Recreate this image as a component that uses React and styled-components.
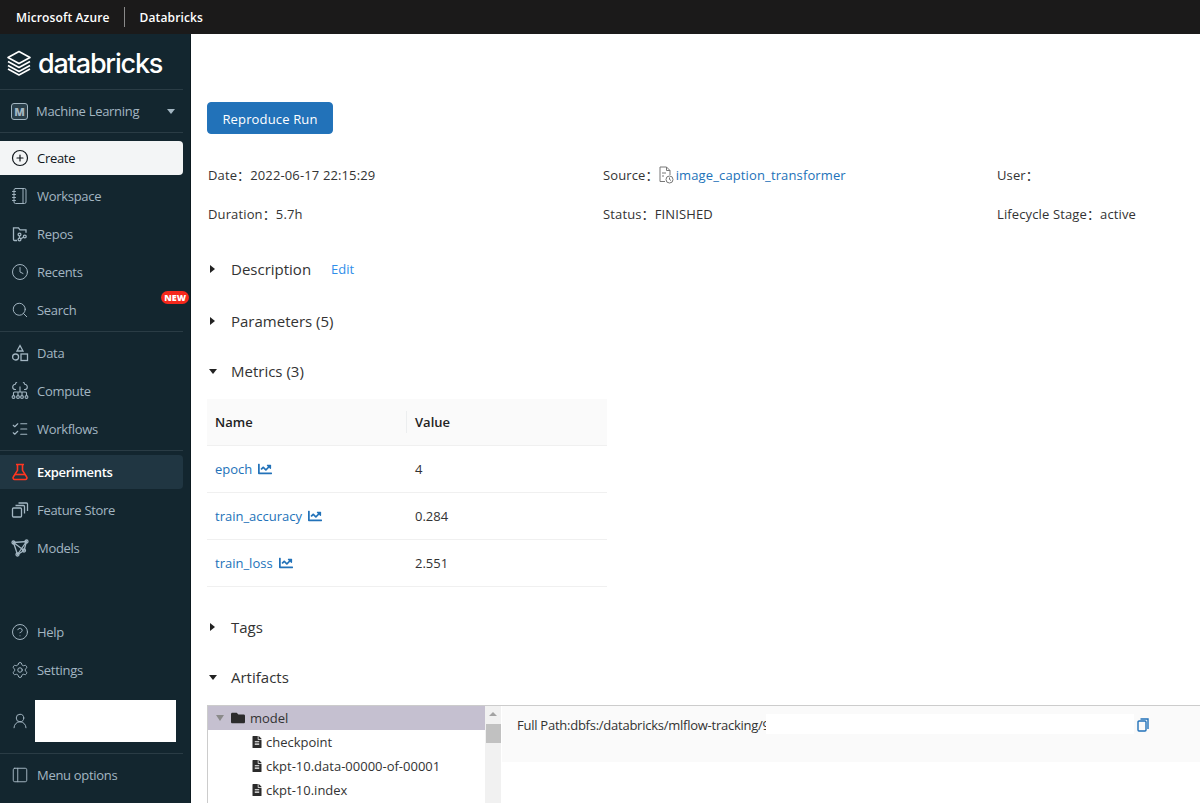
import React from "react";
import styled, { createGlobalStyle } from "styled-components";
import { FaChartLine, FaFileAlt, FaFolder } from "react-icons/fa";
import {
  CirclePlus,
  Clock,
  Search,
  ListChecks,
  CircleHelp,
  Settings,
  UserRound,
  PanelLeft,
  Notebook,
} from "lucide-react";

const GlobalStyle = createGlobalStyle`
  html, body {
    margin: 0;
    padding: 0;
    height: 100%;
    overflow: hidden;
    background: #fff;
    font-family: "Open Sans", "Noto Sans", "Noto Sans CJK SC", sans-serif;
    color: #333;
  }
`;

const Page = styled.div`
  width: 1200px;
  height: 803px;
  display: flex;
  flex-direction: column;
  overflow: hidden;
`;

const TopBar = styled.header`
  height: 34px;
  flex: none;
  background: #1b1a1a;
  display: flex;
  align-items: center;
  padding-left: 16px;
  color: #fff;
  font-size: 12px;
  font-weight: 600;
  letter-spacing: 0.13px;
`;

const TopDivider = styled.span`
  width: 1px;
  height: 20px;
  background: #8a8a8a;
  margin: 0 15px 0 14px;
`;

const Body = styled.div`
  flex: 1;
  display: flex;
  min-height: 0;
`;

const Sidebar = styled.nav`
  flex: none;
  background: #13262f;
  border-right: 1px solid #0d1a20;
  display: flex;
  flex-direction: column;
  padding: 0 7px 11px 0;
  box-sizing: border-box;
  width: 191px;
`;

const LogoRow = styled.div`
  height: 55px;
  box-sizing: border-box;
  padding: 3px 0 0 6px;
  display: flex;
  align-items: center;
  gap: 6px;
  color: #fff;
  font-family: "Inter", sans-serif;
  font-size: 27px;
  font-weight: 500;
  letter-spacing: -1.2px;
`;

const Rule = styled.div`
  height: 1px;
  background: #2a3c45;
  margin: ${(p) => p.$margin || "0"};
`;

const SpaceRow = styled.div`
  height: 42px;
  display: flex;
  align-items: center;
  padding: 0 8px 0 11px;
  color: #a3b6c2;
  font-size: 13px;
  font-weight: 500;
  letter-spacing: -0.3px;
  gap: 8px;
`;

const SpaceBadge = styled.span`
  width: 15px;
  height: 15px;
  border: 1.5px solid #a3b6c2;
  border-radius: 3px;
  display: flex;
  align-items: center;
  justify-content: center;
  font-size: 11px;
  font-weight: 800;
  background: #2a3f4a;
`;

const Caret = styled.span`
  margin-left: auto;
  width: 0;
  height: 0;
  border-left: 4px solid transparent;
  border-right: 4px solid transparent;
  border-top: 5px solid #a3b6c2;
`;

const NavList = styled.div`
  display: flex;
  flex-direction: column;
  gap: 4px;
  margin: ${(p) => p.$margin || "0"};
`;

const NavItem = styled.div`
  position: relative;
  height: 34px;
  display: flex;
  align-items: center;
  gap: 8px;
  padding-left: 11px;
  border-radius: 0 4px 4px 0;
  font-size: 13px;
  letter-spacing: -0.3px;
  font-weight: ${(p) => (p.$active ? 600 : 500)};
  color: ${(p) => (p.$create ? "#11171c" : p.$active ? "#fff" : "#a3b6c2")};
  background: ${(p) => (p.$create ? "#f3f5f6" : p.$active ? "#203642" : "transparent")};
  svg {
    flex: none;
    color: ${(p) => (p.$create ? "#11171c" : p.$active ? "#ff3621" : "#a3b6c2")};
  }
`;

const NewBadge = styled.span`
  position: absolute;
  right: -6px;
  top: -2px;
  height: 13px;
  line-height: 13px;
  padding: 0 3px;
  border-radius: 7px;
  background: #f5281c;
  color: #fff;
  font-size: 9px;
  font-weight: 800;
  letter-spacing: 0;
`;

const Spacer = styled.div`
  flex: 1;
`;

const UserRow = styled.div`
  height: 42px;
  display: flex;
  align-items: center;
  padding-left: 11px;
  margin-top: 13px;
  color: #a3b6c2;
  gap: 6px;
`;

const UserMask = styled.div`
  width: 141px;
  height: 42px;
  background: #fff;
`;

const Main = styled.main`
  flex: 1;
  min-width: 0;
  padding: 68px 0 0 16px;
  font-size: 13px;
  color: #333;
`;

const PrimaryButton = styled.button`
  display: block;
  width: 126px;
  height: 32px;
  border: 1px solid #2374bb;
  border-radius: 4px;
  background: #2272b9;
  color: #fff;
  font: inherit;
  font-size: 13px;
  letter-spacing: 0.15px;
  padding: 1px 0 0;
`;

const MetaGrid = styled.div`
  display: grid;
  grid-template-columns: 395px 394px 1fr;
  row-gap: 19px;
  margin: 31px 0 0 1px;
  line-height: 20px;
  letter-spacing: 0.13px;
`;

const MetaItem = styled.div`
  display: flex;
  align-items: center;
  white-space: nowrap;
`;

const FileClock = styled.svg`
  margin: 0 2px 0 0;
`;

const LinkText = styled.a`
  color: #2272b9;
`;

const SectionHead = styled.div`
  height: 24px;
  margin-top: ${(p) => p.$top}px;
  display: flex;
  align-items: center;
  font-size: 15px;
  color: #333;
`;

const Arrow = styled.span`
  width: 0;
  height: 0;
  margin: 0 ${(p) => (p.$open ? "14px" : "16px")} 0 ${(p) => (p.$open ? "2px" : "3px")};
  ${(p) =>
    p.$open
      ? `border-left: 4.5px solid transparent; border-right: 4.5px solid transparent; border-top: 5px solid #222;`
      : `border-top: 4.5px solid transparent; border-bottom: 4.5px solid transparent; border-left: 5px solid #222;`}
`;

const EditLink = styled.a`
  color: #2f8eea;
  font-size: 13px;
  margin-left: 20px;
`;

const MetricsTable = styled.div`
  width: 400px;
  margin-top: 16px;
`;

const MetricRow = styled.div`
  display: grid;
  grid-template-columns: 199px 1fr;
  align-items: center;
  height: 46px;
  border-bottom: 1px solid #f0f0f0;
  background: ${(p) => (p.$head ? "#fafafa" : "#fff")};
  font-weight: ${(p) => (p.$head ? 600 : 400)};
  color: ${(p) => (p.$head ? "#222" : "#333")};
`;

const MetricName = styled.div`
  padding-left: 8px;
  display: flex;
  align-items: center;
  gap: 6px;
  color: ${(p) => (p.$head ? "#222" : "#2272b9")};
`;

const MetricValue = styled.div`
  padding-left: 9px;
  ${(p) => (p.$head ? "border-left: 1px solid #eceeef; padding-left: 8px; line-height: 22px;" : "")}
`;

const ArtifactPanel = styled.div`
  margin-top: 16px;
  border-top: 1px solid #ccc;
  border-left: 1px solid #ccc;
  display: flex;
  height: 98px;
  overflow: hidden;
`;

const TreePane = styled.div`
  width: 277px;
  flex: none;
`;

const TreeRow = styled.div`
  height: 24px;
  display: flex;
  align-items: center;
  gap: ${(p) => (p.$selected ? 5 : 3)}px;
  padding-left: ${(p) => p.$indent}px;
  background: ${(p) => (p.$selected ? "#c5c0d0" : "transparent")};
  font-size: 13px;
  color: #333;
  svg {
    color: #2b2b2b;
    flex: none;
  }
`;

const TreeCaret = styled.span`
  width: 0;
  height: 0;
  border-left: 4px solid transparent;
  border-right: 4px solid transparent;
  border-top: 6px solid #8a8a8a;
  margin-right: 2px;
`;

const ScrollTrack = styled.div`
  width: 16px;
  flex: none;
  background: #f1f1f1;
  position: relative;
  &::before {
    content: "";
    position: absolute;
    top: 6px;
    left: 4px;
    border-left: 4px solid transparent;
    border-right: 4px solid transparent;
    border-bottom: 4px solid #a3a3a3;
  }
  &::after {
    content: "";
    position: absolute;
    top: 18px;
    left: 1px;
    width: 15px;
    height: 19px;
    background: #c1c1c1;
  }
`;

const DetailPane = styled.div`
  flex: 1;
  min-width: 0;
  height: 56px;
  box-sizing: border-box;
  margin-left: 1px;
  background: #fafafa;
  display: flex;
  align-items: flex-start;
  padding: 8px 0 0 15px;
  font-size: 13px;
  line-height: 20px;
  color: #333;
  svg {
    color: #2272b9;
    flex: none;
    margin: 4px 0 0 3px;
  }
`;

const PathText = styled.span`
  white-space: nowrap;
  width: 249px;
  height: 20px;
  padding-top: 1px;
  overflow: hidden;
  letter-spacing: -0.25px;
`;

const PathMask = styled.div`
  width: 368px;
  height: 20px;
  background: #fff;
`;

const iconProps = { width: 18, height: 18, fill: "none", stroke: "currentColor", strokeWidth: 1.3, viewBox: "0 0 18 18" };

const BrickLogo = () => (
  <svg width="26" height="26" viewBox="0 0 26 26" fill="none" stroke="#fff" strokeWidth="1.6" strokeLinejoin="round">
    <path d="M13 1.5 24 7.5 13 13.5 2 7.5Z" />
    <path d="M2 11.5 13 17.5 24 11.5" />
    <path d="M2 15.5 13 21.5 24 15.5" />
    <path d="M2 19 13 25 24 19" />
  </svg>
);

const RepoIcon = () => (
  <svg {...iconProps}>
    <path d="M6 15.5H3.5a1 1 0 0 1-1-1V2.8h5l1.5 2h6v3" />
    <circle cx="8.5" cy="9.5" r="1.4" />
    <circle cx="8.5" cy="14.5" r="1.4" />
    <circle cx="13.8" cy="11.5" r="1.4" />
    <path d="M8.5 11v2M9.8 13.8l2.8-1.6" />
  </svg>
);

const DataIcon = () => (
  <svg {...iconProps}>
    <path d="M9 1.5 12 7H6Z" />
    <circle cx="4.6" cy="13" r="3" />
    <rect x="10" y="10" width="6.5" height="6.5" />
  </svg>
);

const ComputeIcon = () => (
  <svg {...iconProps} strokeWidth="1.1">
    <path d="M5 7.5H4.3a2.6 2.6 0 0 1 0-5.2 4.9 4.9 0 0 1 9.4 0 2.6 2.6 0 0 1 0 5.2H13" />
    <path d="M9 4.5v5.5M2.5 13.5V11a1 1 0 0 1 1-1h11a1 1 0 0 1 1 1v2.5M7 10v3.5M11 10v3.5" />
    <circle cx="2.5" cy="15" r="1.4" />
    <circle cx="7" cy="15" r="1.4" />
    <circle cx="11" cy="15" r="1.4" />
    <circle cx="15.5" cy="15" r="1.4" />
  </svg>
);

const FlaskIcon = () => (
  <svg {...iconProps} strokeWidth="1.6">
    <path d="M5 1.5h8M6.5 1.5v5.8L2.3 14a1.6 1.6 0 0 0 1.4 2.5h10.6a1.6 1.6 0 0 0 1.4-2.5l-4.2-6.7V1.5" />
    <path d="M4 11.5h10" />
  </svg>
);

const StoreIcon = () => (
  <svg {...iconProps}>
    <rect x="1.5" y="7" width="9" height="9" rx="1" />
    <path d="M4.5 4.5h8a1 1 0 0 1 1 1v7" />
    <path d="M7.5 2h8a1 1 0 0 1 1 1v7" />
  </svg>
);

const ModelIcon = () => (
  <svg {...iconProps}>
    <path d="M2.5 3.5 15.5 2.5 13 11.5 6.5 15.5Z" />
    <path d="M2.5 3.5 13 11.5M15.5 2.5 6.5 15.5" />
    <circle cx="2.5" cy="3.5" r="1.5" />
    <circle cx="15.5" cy="2.5" r="1.5" />
    <circle cx="13" cy="11.5" r="1.5" />
    <circle cx="6.5" cy="15.5" r="1.5" />
  </svg>
);

const SourceIcon = () => (
  <FileClock width="15" height="18" viewBox="0 0 15 18" fill="none" stroke="#777" strokeWidth="1">
    <path d="M6 15.5H1V1h6.5L11 4.5V9" />
    <path d="M7.5 1v3.5H11" />
    <path d="M3 7h4M3 10h2" />
    <circle cx="10.5" cy="13.5" r="3.5" />
    <path d="M10.5 11.5v2l1.5 1" />
  </FileClock>
);

const CopyIcon = () => (
  <svg width="12" height="14" viewBox="0 0 12 14" fill="none" stroke="currentColor" strokeWidth="1.4">
    <rect x="1" y="3" width="8" height="10" rx="1" />
    <path d="M3.5 1H11v10" />
  </svg>
);

const topNav = [
  { label: "Create", icon: <CirclePlus size={18} strokeWidth={1.6} />, create: true },
  { label: "Workspace", icon: <Notebook size={18} strokeWidth={1.3} /> },
  { label: "Repos", icon: <RepoIcon /> },
  { label: "Recents", icon: <Clock size={18} strokeWidth={1.3} /> },
  { label: "Search", icon: <Search size={18} strokeWidth={1.3} />, isNew: true },
];
const dataNav = [
  { label: "Data", icon: <DataIcon /> },
  { label: "Compute", icon: <ComputeIcon /> },
  { label: "Workflows", icon: <ListChecks size={18} strokeWidth={1.5} /> },
];
const mlNav = [
  { label: "Experiments", icon: <FlaskIcon />, active: true },
  { label: "Feature Store", icon: <StoreIcon /> },
  { label: "Models", icon: <ModelIcon /> },
];
const metrics = [
  { name: "epoch", value: "4" },
  { name: "train_accuracy", value: "0.284" },
  { name: "train_loss", value: "2.551" },
];

const renderNav = (items) =>
  items.map((item) => (
    <NavItem key={item.label} $active={item.active} $create={item.create}>
      {item.icon}
      {item.label}
      {item.isNew && <NewBadge>NEW</NewBadge>}
    </NavItem>
  ));

export default function App() {
  return (
    <Page>
      <GlobalStyle />
      <TopBar>
        Microsoft Azure
        <TopDivider />
        Databricks
      </TopBar>
      <Body>
        <Sidebar>
          <LogoRow>
            <BrickLogo />
            databricks
          </LogoRow>
          <Rule />
          <SpaceRow>
            <SpaceBadge>M</SpaceBadge>
            Machine Learning
            <Caret />
          </SpaceRow>
          <Rule />
          <NavList $margin="8px 0 4px">{renderNav(topNav)}</NavList>
          <Rule />
          <NavList $margin="4px 0">{renderNav(dataNav)}</NavList>
          <Rule />
          <NavList $margin="4px 0 0">{renderNav(mlNav)}</NavList>
          <Spacer />
          <NavList>
            {renderNav([
              { label: "Help", icon: <CircleHelp size={18} strokeWidth={1.3} /> },
              { label: "Settings", icon: <Settings size={18} strokeWidth={1.3} /> },
            ])}
          </NavList>
          <UserRow>
            <UserRound size={18} strokeWidth={1.3} />
            <UserMask />
          </UserRow>
          <Rule $margin="11px 0 4px" />
          <NavList>
            {renderNav([{ label: "Menu options", icon: <PanelLeft size={18} strokeWidth={1.3} /> }])}
          </NavList>
        </Sidebar>
        <Main>
          <PrimaryButton>Reproduce Run</PrimaryButton>
          <MetaGrid>
            <MetaItem>Date：2022-06-17 22:15:29</MetaItem>
            <MetaItem>
              Source：
              <SourceIcon />
              <LinkText>image_caption_transformer</LinkText>
            </MetaItem>
            <MetaItem>User：</MetaItem>
            <MetaItem>Duration：5.7h</MetaItem>
            <MetaItem>Status：FINISHED</MetaItem>
            <MetaItem>Lifecycle Stage：active</MetaItem>
          </MetaGrid>
          <SectionHead $top={33}>
            <Arrow />
            Description
            <EditLink>Edit</EditLink>
          </SectionHead>
          <SectionHead $top={28}>
            <Arrow />
            Parameters (5)
          </SectionHead>
          <SectionHead $top={26}>
            <Arrow $open />
            Metrics (3)
          </SectionHead>
          <MetricsTable>
            <MetricRow $head>
              <MetricName $head>Name</MetricName>
              <MetricValue $head>Value</MetricValue>
            </MetricRow>
            {metrics.map((m) => (
              <MetricRow key={m.name}>
                <MetricName>
                  {m.name}
                  <FaChartLine size={14} />
                </MetricName>
                <MetricValue>{m.value}</MetricValue>
              </MetricRow>
            ))}
          </MetricsTable>
          <SectionHead $top={28}>
            <Arrow />
            Tags
          </SectionHead>
          <SectionHead $top={26}>
            <Arrow $open />
            Artifacts
          </SectionHead>
          <ArtifactPanel>
            <TreePane>
              <TreeRow $selected $indent={8}>
                <TreeCaret />
                <FaFolder size={14} />
                model
              </TreeRow>
              <TreeRow $indent={43}>
                <FaFileAlt size={12} />
                checkpoint
              </TreeRow>
              <TreeRow $indent={43}>
                <FaFileAlt size={12} />
                ckpt-10.data-00000-of-00001
              </TreeRow>
              <TreeRow $indent={43}>
                <FaFileAlt size={12} />
                ckpt-10.index
              </TreeRow>
            </TreePane>
            <ScrollTrack />
            <DetailPane>
              <PathText>Full Path:dbfs:/databricks/mlflow-tracking/9</PathText>
              <PathMask />
              <CopyIcon />
            </DetailPane>
          </ArtifactPanel>
        </Main>
      </Body>
    </Page>
  );
}
